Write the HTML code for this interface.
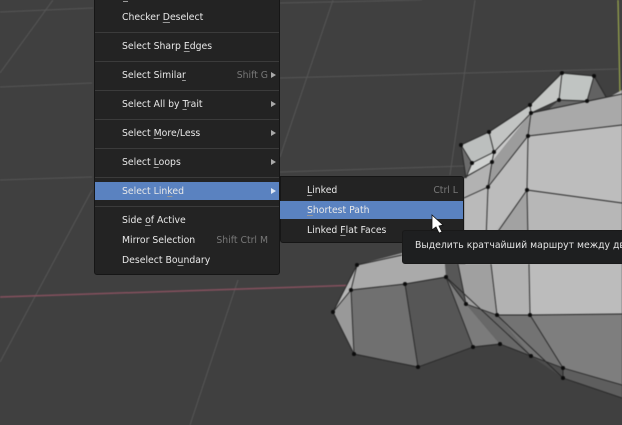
<!DOCTYPE html>
<html lang="en"><head><meta charset="utf-8"><title>Blender Select Linked menu</title>
<style>
html,body{margin:0;padding:0;background:#404040}
#s{position:relative;width:622px;height:425px;overflow:hidden;background:#404040;font-family:"DejaVu Sans","Liberation Sans",sans-serif;font-size:9.3px;color:#e8e8e8}
#s>svg{position:absolute;left:0;top:0;filter:blur(.5px)}
.menu{position:absolute;background:#232323;border:1px solid #161616;box-sizing:border-box;border-radius:3px}
.t{position:absolute;line-height:12px;white-space:nowrap}
.t u{text-decoration-color:#999;text-underline-offset:2px}
.k{position:absolute;line-height:12px;color:#777;white-space:nowrap;text-align:right}
.a{position:absolute;width:0;height:0;border-left:5px solid #aaa;border-top:3px solid transparent;border-bottom:3px solid transparent}
.sep{position:absolute;height:1px;background:#3b3b3b}
.hl{position:absolute;background:#5a82c0}
</style></head><body>
<div id="s">
<svg width="622" height="425" viewBox="0 0 622 425">
<g stroke="#565656" stroke-width="1" fill="none">
<path d="M0 12L93 8M0 87L92 83M0 180L92 177M280 3L422 0M280 78L618 69M280 172L465 166"/>
<path d="M53 0L0 73M92 190L0 362M333 0L280 157M475 0L450 175M238 280L190 425"/>
</g>
<path d="M0 297L360 285" stroke="#85505e" stroke-width="1.5"/>
<path d="M618 0L620 95" stroke="#9aa84c" stroke-width="1.2"/>
<g stroke="none">
<polygon points="464,178 622,90 622,315 466,304" fill="#b6b6b6"/>
<polygon points="562,73 594,76 587,101 559,100" fill="#c0c4c2"/>
<polygon points="562,73 559,100 531,113 530,105" fill="#c4c6c4"/>
<polygon points="559,100 587,101 548,110" fill="#6a6a6a"/>
<polygon points="594,76 587,101 606,97" fill="#626262"/>
<polygon points="461,145 489,132 494,152 472,163" fill="#bcbfbe"/>
<polygon points="489,132 530,105 531,113 494,152" fill="#c2c4c3"/>
<polygon points="472,163 494,152 492,162 466,176" fill="#d0d2d1"/>
<polygon points="461,145 472,163 466,178" fill="#6c6c6c"/>
<polygon points="494,152 531,113 492,162" fill="#c8c8c8"/>
<polygon points="531,113 528,136 488,187 492,162" fill="#9c9c9c"/>
<polygon points="464,178 492,162 488,187 464,198" fill="#b2b2b2"/>
<polygon points="464,198 488,187 486,235 464,235" fill="#bababa"/>
<polygon points="488,187 528,136 527,190 492,235 486,235" fill="#bcbcbc"/>
<polygon points="531,113 622,94 622,125 528,136" fill="#a9a9a9"/>
<polygon points="528,136 622,125 622,203 527,190" fill="#bdbdbd"/>
<polygon points="527,190 622,203 622,240 528,240" fill="#b7b7b7"/>
<polygon points="527,190 528,240 492,240" fill="#a2a2a2"/>
<polygon points="357,265 402,253 450,253 446,277 405,284 351,290" fill="#aaa"/>
<polygon points="444,253 458,253 466,304 446,277" fill="#575757"/>
<polygon points="458,264 491,264 497,315 466,304" fill="#a0a0a0"/>
<polygon points="491,264 529,264 530,315 497,315" fill="#b2b2b2"/>
<polygon points="529,264 622,264 622,314 530,315" fill="#bcbcbc"/>
<polygon points="351,290 405,284 418,367 354,354" fill="#707070"/>
<polygon points="405,284 446,277 473,347 418,367" fill="#565656"/>
<polygon points="446,277 466,304 500,344 473,347" fill="#7b7b7b"/>
<polygon points="466,304 497,315 531,356 500,344" fill="#686868"/>
<polygon points="497,315 530,315 563,368 531,356" fill="#737373"/>
<polygon points="530,315 622,314 622,385 563,368" fill="#7e7e7e"/>
<polygon points="563,368 622,385 622,398 563,378" fill="#5e5e5e"/>
<polygon points="531,356 563,368 563,378" fill="#4c4c4c"/>
<polygon points="357,265 351,290 333,312" fill="#b5b5b5"/>
<polygon points="351,290 354,354 333,312" fill="#999"/>
</g>
<g stroke="#262626" stroke-width=".9" fill="none" stroke-linejoin="round">
<path d="M562 73L594 76L606 97M594 76L587 101L559 100L562 73L530 105L489 132L461 145L472 163L494 152L489 132M559 100L531 113L622 94M530 105L531 113L528 136L527 190L528 240M528 136L622 125M527 190L622 203M527 190L492 240M531 113L494 152M528 136L488 187L486 240M494 152L492 162L488 187L464 198M492 162L464 178M472 163L466 178M461 145L466 178"/>
<path d="M402 255L357 265L333 312L354 354L418 367L473 347L500 344L531 356L563 368L563 378L622 398M357 265L351 290L405 284L446 277L466 304L497 315L530 315L622 314M351 290L333 312M351 290L354 354M405 284L418 367M446 277L473 347M446 277L531 356M466 304L458 264M497 315L491 264M497 315L563 378M530 315L529 264M530 315L563 368L622 385M500 344L531 356"/>
</g>
<g fill="#0c0c0c">
<circle cx="562" cy="73" r="2"/><circle cx="594" cy="76" r="2"/><circle cx="559" cy="100" r="2"/><circle cx="587" cy="101" r="2"/><circle cx="530" cy="105" r="2"/><circle cx="531" cy="113" r="2"/><circle cx="528" cy="136" r="2"/><circle cx="489" cy="132" r="2"/><circle cx="461" cy="145" r="2"/><circle cx="472" cy="163" r="2"/><circle cx="494" cy="152" r="2"/><circle cx="492" cy="162" r="2"/><circle cx="488" cy="187" r="2"/><circle cx="527" cy="190" r="2"/>
<circle cx="357" cy="265" r="2"/><circle cx="351" cy="290" r="2"/><circle cx="333" cy="312" r="2"/><circle cx="354" cy="354" r="2"/><circle cx="418" cy="367" r="2"/><circle cx="405" cy="284" r="2"/><circle cx="446" cy="277" r="2"/><circle cx="466" cy="304" r="2"/><circle cx="497" cy="315" r="2"/><circle cx="530" cy="315" r="2"/><circle cx="473" cy="347" r="2"/><circle cx="500" cy="344" r="2"/><circle cx="531" cy="356" r="2"/><circle cx="563" cy="368" r="2"/><circle cx="563" cy="378" r="2"/>
</g>
</svg>

<div class="menu" style="left:94px;top:-4px;width:186px;height:279px"></div>
<div class="sep" style="left:95px;top:32px;width:184px"></div>
<div class="sep" style="left:95px;top:61px;width:184px"></div>
<div class="sep" style="left:95px;top:90px;width:184px"></div>
<div class="sep" style="left:95px;top:119px;width:184px"></div>
<div class="sep" style="left:95px;top:148px;width:184px"></div>
<div class="sep" style="left:95px;top:177px;width:184px"></div>
<div class="sep" style="left:95px;top:206px;width:184px"></div>
<div class="hl" style="left:95px;top:182px;width:184px;height:18px"></div>
<div class="sep" style="left:123px;top:1px;width:5px;background:#999"></div>

<div class="t" style="left:122px;top:12px">Checker <u>D</u>eselect</div>
<div class="t" style="left:122px;top:41px">Select Sharp <u>E</u>dges</div>
<div class="t" style="left:122px;top:70px">Select Simila<u>r</u></div>
<div class="k" style="left:208px;top:70px;width:60px">Shift G</div>
<div class="a" style="left:271px;top:72px"></div>
<div class="t" style="left:122px;top:99px">Select All by <u>T</u>rait</div>
<div class="a" style="left:271px;top:101px"></div>
<div class="t" style="left:122px;top:128px">Select <u>M</u>ore/Less</div>
<div class="a" style="left:271px;top:130px"></div>
<div class="t" style="left:122px;top:157px">Select <u>L</u>oops</div>
<div class="a" style="left:271px;top:159px"></div>
<div class="t" style="left:122px;top:186px">Select Lin<u>k</u>ed</div>
<div class="a" style="left:271px;top:188px;border-left-color:#dfe8f5"></div>
<div class="t" style="left:122px;top:215px">Side <u>o</u>f Active</div>
<div class="t" style="left:122px;top:235px">Mirror Selection</div>
<div class="k" style="left:188px;top:235px;width:80px">Shift Ctrl M</div>
<div class="t" style="left:122px;top:255px">Deselect Bo<u>u</u>ndary</div>

<div class="menu" style="left:280px;top:176px;width:184px;height:67px;border-radius:0 3px 3px 3px"></div>
<div class="hl" style="left:280px;top:201px;width:183px;height:18px"></div>
<div class="t" style="left:307px;top:185px"><u>L</u>inked</div>
<div class="k" style="left:398px;top:185px;width:60px">Ctrl L</div>
<div class="t" style="left:307px;top:205px"><u>S</u>hortest Path</div>
<div class="t" style="left:307px;top:225px">Linked <u>F</u>lat Faces</div>

<div class="menu" style="left:402px;top:230px;width:240px;height:34px;background:#1e1f20;border-color:#191919"></div>
<div class="t" style="left:415px;top:240px;color:#e4e4e4">Выделить кратчайший маршрут между двумя</div>

<svg width="622" height="425" viewBox="0 0 622 425" style="filter:none">
<path d="M432 215L432 230L436 227L439 233L442 232L439 226L443 225Z" fill="#fff" stroke="#111" stroke-width=".8"/>
</svg>
</div>
</body></html>
